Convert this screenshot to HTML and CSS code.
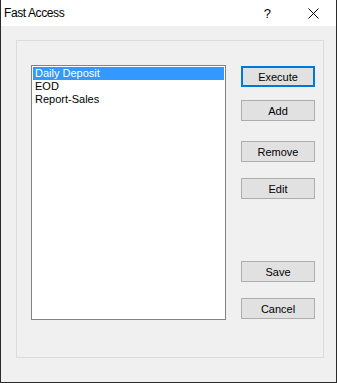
FILE: index.html
```html
<!DOCTYPE html>
<html lang="en">

<head>
    <meta charset="UTF-8">
    <title>Fast Access</title>
    <link rel="stylesheet" href="styles.css">
</head>

<body>
    <div class="window">
        <div class="title-bar">
            <span class="title">Fast Access</span>
            <span class="help">?</span>
            <span class="close">
                <svg width="11" height="11" viewBox="0 0 11 11">
                    <path d="M0.5 0.5 L10.5 10.5 M10.5 0.5 L0.5 10.5" stroke="#000" stroke-width="1" fill="none"/>
                </svg>
            </span>
        </div>
        <div class="client">
            <div class="group">
                <div class="listbox">
                    <div class="item selected">Daily Deposit</div>
                    <div class="item">EOD</div>
                    <div class="item">Report-Sales</div>
                </div>
                <div class="buttons">
                    <button class="btn default">Execute</button>
                    <button class="btn add">Add</button>
                    <button class="btn remove">Remove</button>
                    <button class="btn edit">Edit</button>
                    <button class="btn save">Save</button>
                    <button class="btn cancel">Cancel</button>
                </div>
            </div>
        </div>
    </div>
</body>

</html>
```

FILE: styles.css
```css
body {
    margin: 0;
    font-family: "Liberation Sans", Arial, sans-serif;
    font-size: 11px;
}

.window {
    box-sizing: border-box;
    width: 337px;
    height: 383px;
    background: #f0f0f0;
    border: 1px solid #2b2b2b;
    border-top: none;
}

.title-bar {
    display: flex;
    align-items: center;
    height: 26px;
    background: #fff;
}

.title {
    margin-left: 3px;
    font-size: 12px;
    letter-spacing: -0.4px;
    flex: 1;
}

.help {
    font-size: 13px;
    margin-right: 37px;
}

.close {
    display: flex;
    margin-right: 17px;
}

.client {
    padding: 14px 0 0 15px;
}

.group {
    box-sizing: border-box;
    display: flex;
    width: 308px;
    height: 318px;
    border: 1px solid #dcdcdc;
    padding: 24px 0 0 14px;
}

.listbox {
    box-sizing: border-box;
    width: 195px;
    height: 255px;
    background: #fff;
    border: 1px solid #828282;
    padding: 1px;
}

.item {
    height: 13px;
    line-height: 13px;
    padding-left: 2px;
}

.item.selected {
    background: #3399ff;
    color: #fff;
}

.buttons {
    display: flex;
    flex-direction: column;
    margin-left: 15px;
    padding-top: 1px;
}

.btn {
    box-sizing: border-box;
    width: 74px;
    height: 21px;
    padding: 0;
    font-family: "Liberation Sans", Arial, sans-serif;
    font-size: 11px;
    color: #000;
    background: #e1e1e1;
    border: 1px solid #adadad;
}

.btn.default {
    border: 2px solid #0078d7;
}

.add {
    margin-top: 13px;
}

.remove {
    margin-top: 20px;
}

.edit {
    margin-top: 16px;
}

.save {
    margin-top: 62px;
}

.cancel {
    margin-top: 16px;
}
```
